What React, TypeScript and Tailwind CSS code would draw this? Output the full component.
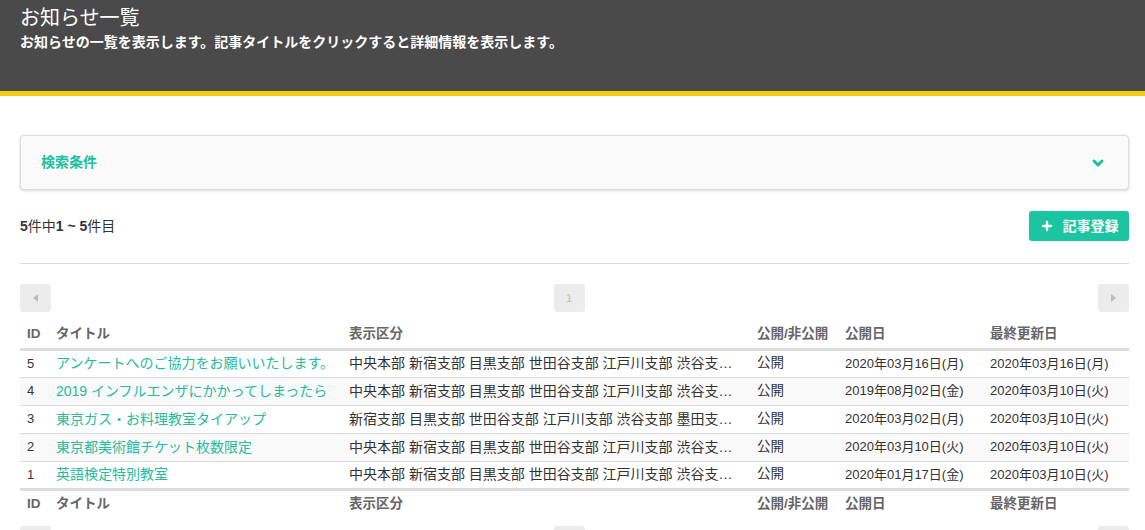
import { ChevronDown, Plus } from "lucide-react";

type Notice = {
  id: number;
  title: string;
  area: string;
  status: string;
  published: string;
  updated: string;
};

const notices: Notice[] = [
  {
    id: 5,
    title: "アンケートへのご協力をお願いいたします。",
    area: "中央本部 新宿支部 目黒支部 世田谷支部 江戸川支部 渋谷支部 墨田支部",
    status: "公開",
    published: "2020年03月16日(月)",
    updated: "2020年03月16日(月)",
  },
  {
    id: 4,
    title: "2019 インフルエンザにかかってしまったら",
    area: "中央本部 新宿支部 目黒支部 世田谷支部 江戸川支部 渋谷支部 墨田支部",
    status: "公開",
    published: "2019年08月02日(金)",
    updated: "2020年03月10日(火)",
  },
  {
    id: 3,
    title: "東京ガス・お料理教室タイアップ",
    area: "新宿支部 目黒支部 世田谷支部 江戸川支部 渋谷支部 墨田支部 中央本部",
    status: "公開",
    published: "2020年03月02日(月)",
    updated: "2020年03月10日(火)",
  },
  {
    id: 2,
    title: "東京都美術館チケット枚数限定",
    area: "中央本部 新宿支部 目黒支部 世田谷支部 江戸川支部 渋谷支部 墨田支部",
    status: "公開",
    published: "2020年03月10日(火)",
    updated: "2020年03月10日(火)",
  },
  {
    id: 1,
    title: "英語検定特別教室",
    area: "中央本部 新宿支部 目黒支部 世田谷支部 江戸川支部 渋谷支部 墨田支部",
    status: "公開",
    published: "2020年01月17日(金)",
    updated: "2020年03月10日(火)",
  },
];

function Caret({ dir }: { dir: "left" | "right" }) {
  return (
    <svg width="5" height="8" viewBox="0 0 5 8" className="fill-[#bbb]">
      {dir === "left" ? <path d="M5 0 L0 4 L5 8 Z" /> : <path d="M0 0 L5 4 L0 8 Z" />}
    </svg>
  );
}

function Pager() {
  return (
    <div className="flex items-center justify-between">
      <button className="flex h-[28px] w-[31px] items-center justify-center rounded-[3px] bg-[#ececec]">
        <Caret dir="left" />
      </button>
      <button className="mr-[11px] flex h-[28px] w-[31px] items-center justify-center rounded-[3px] bg-[#ececec] text-[11px] text-[#bbb]">
        1
      </button>
      <button className="flex h-[28px] w-[31px] items-center justify-center rounded-[3px] bg-[#ececec]">
        <Caret dir="right" />
      </button>
    </div>
  );
}

function HeadRow() {
  return (
    <tr className="h-[29px] text-left text-[13.5px] text-[#666]">
      <th className="px-[7px] font-bold">ID</th>
      <th className="px-[7px] font-bold">タイトル</th>
      <th className="px-[7px] font-bold">表示区分</th>
      <th className="px-[7px] font-bold">公開/非公開</th>
      <th className="px-[7px] font-bold">公開日</th>
      <th className="px-[7px] font-bold">最終更新日</th>
    </tr>
  );
}

export default function App() {
  return (
    <div
      className="h-[530px] overflow-hidden bg-white text-[#333]"
      style={{ fontFamily: '"Liberation Sans", "Noto Sans CJK JP", sans-serif' }}
    >
      <header className="h-[96px] border-b-[5px] border-[#f2cd12] bg-[#4a4a4a] pl-[20px] pr-[16px] pt-[5px] text-white">
        <h1 className="text-[20px] leading-[27px]">お知らせ一覧</h1>
        <p className="text-[14px] font-bold leading-[20px]">
          お知らせの一覧を表示します。記事タイトルをクリックすると詳細情報を表示します。
        </p>
      </header>

      <main className="pl-[20px] pr-[16px] pt-[39px]">
        <div className="flex h-[55px] items-center justify-between rounded-[4px] border border-[#ddd] bg-[#fafafa] pl-[20px] pr-[22px] shadow-[0_1px_3px_rgba(0,0,0,0.15)]">
          <span className="text-[14px] font-bold text-[#1bbf9c]">検索条件</span>
          <ChevronDown className="h-[16px] w-[16px] text-[#1bbf9c]" strokeWidth={4.5} />
        </div>

        <div className="mt-[21px] flex items-center justify-between">
          <p className="text-[14px]">
            <b>5</b>件中<b>1 ~ 5</b>件目
          </p>
          <button className="flex h-[30px] w-[100px] items-center justify-center gap-[9px] rounded-[3px] bg-[#1cc5a2] text-[14px] font-bold text-white">
            <Plus className="h-[14px] w-[14px]" strokeWidth={4} />
            記事登録
          </button>
        </div>

        <hr className="mt-[22px] border-[#ddd]" />

        <div className="mt-[20px]">
          <Pager />
        </div>

        <table className="mt-[8px] w-full table-fixed border-collapse text-[13px]">
          <colgroup>
            <col className="w-[29px]" />
            <col className="w-[293px]" />
            <col className="w-[408px]" />
            <col className="w-[88px]" />
            <col className="w-[145px]" />
            <col />
          </colgroup>
          <thead className="border-b-[3px] border-[#ddd]">
            <HeadRow />
          </thead>
          <tbody>
            {notices.map((n, i) => (
              <tr
                key={n.id}
                className={`h-[28px] border-t border-[#ddd] ${i % 2 === 1 ? "bg-[#f9f9f9]" : "bg-white"}`}
              >
                <td className="px-[7px]">{n.id}</td>
                <td className="truncate px-[7px] text-[14px] text-[#26bb9c]">{n.title}</td>
                <td className="truncate pl-[7px] pr-[14px] text-[14px]">{n.area}</td>
                <td className="px-[7px] text-[13.5px]">{n.status}</td>
                <td className="whitespace-nowrap px-[7px]">{n.published}</td>
                <td className="whitespace-nowrap px-[7px]">{n.updated}</td>
              </tr>
            ))}
          </tbody>
          <tfoot className="border-t-[3px] border-[#ddd]">
            <HeadRow />
          </tfoot>
        </table>

        <div className="mt-[8px] pb-[20px]">
          <Pager />
        </div>
      </main>
    </div>
  );
}
